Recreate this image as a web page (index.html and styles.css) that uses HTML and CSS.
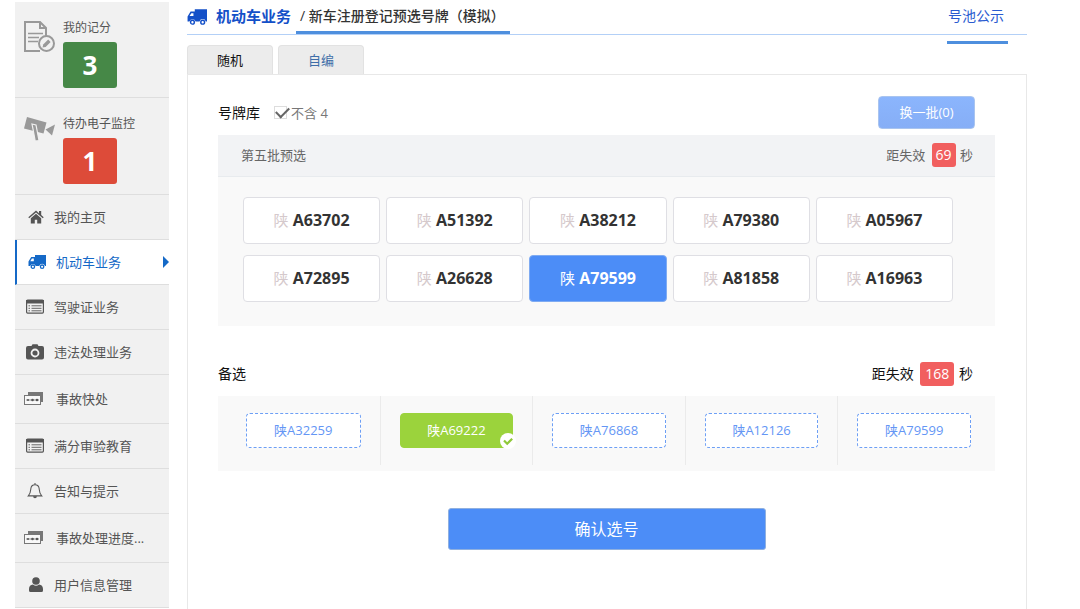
FILE: index.html
```html
<!DOCTYPE html>
<html lang="zh-CN">
<head>
<meta charset="utf-8">
<title>新车注册登记预选号牌</title>
<link rel="stylesheet" href="styles.css">
</head>
<body>
<svg class="sprite" aria-hidden="true">
  <symbol id="truck" viewBox="0 0 18 16">
    <path fill="currentColor" d="M7 1h11v11h-1.100a2.900 2.900 0 0 0-5.600 0H7.700a2.900 2.900 0 0 0-5.500 0H.5V7.500L3.200 3H7z"/>
    <path fill="#fff" d="M3.900 4.600H5.800v2.600H2.300z"/>
    <circle cx="4.900" cy="12.700" r="1.700" fill="#fff" stroke="currentColor" stroke-width="1.300"/>
    <circle cx="14.100" cy="12.700" r="1.700" fill="#fff" stroke="currentColor" stroke-width="1.300"/>
  </symbol>
  <symbol id="list" viewBox="0 0 18 15">
    <rect x=".6" y=".6" width="16.800" height="13" rx="1" fill="none" stroke="currentColor" stroke-width="1.200"/>
    <path fill="currentColor" d="M0 .5h18v3.500H0z"/>
    <path stroke="currentColor" stroke-width=".9" d="M2.500 6.300h1.500M5.500 6.300h10M2.500 8.800h1.500M5.500 8.800h10M2.500 11.300h1.500M5.500 11.300h10"/>
  </symbol>
  <symbol id="cards" viewBox="0 0 20 14">
    <path fill="#777" d="M4 0h15v10h-2V3H4z"/>
    <rect x=".5" y="3.500" width="16" height="9" fill="#f8f8f8" stroke="#777"/>
    <path stroke="#777" stroke-width=".8" d="M2 8h13"/>
    <g fill="#555"><circle cx="4" cy="8" r="1"/><circle cx="8.500" cy="8" r="1.300"/><circle cx="13" cy="8" r="1.300"/></g>
  </symbol>
</svg>
<div class="page">
  <aside class="sidebar">
    <section class="stat">
      <svg class="stat-icon" viewBox="0 0 31 31" fill="none" stroke="#999" stroke-width="2">
        <path d="M16 30H1V1h15l6 6v8"/>
        <path d="M16 1v6h6"/>
        <path d="M4 12.500h15M4 16.500h11M4 20.500h10" stroke-width="1.500"/>
        <circle cx="22.500" cy="22.500" r="7.500"/>
        <path fill="#999" stroke="none" d="M18.500 26.500l.7-3 5-5 2.400 2.400-5 5z"/>
      </svg>
      <div>
        <h2 class="stat-label">我的记分</h2>
        <strong class="stat-value green">3</strong>
      </div>
    </section>
    <section class="stat">
      <svg class="stat-icon" viewBox="0 0 31 31" fill="#999">
        <path d="M3 0l19.500 5.500-3 11L0 11.500z"/>
        <path fill="#999" stroke="#f1f1f1" stroke-width="1.200" d="M8 7l4 1 3 15.500-3.800.5-2.200-12z"/>
        <path d="M31 7.500l-3 11-6.500-6z"/>
      </svg>
      <div>
        <h2 class="stat-label">待办电子监控</h2>
        <strong class="stat-value red">1</strong>
      </div>
    </section>
    <nav class="menu">
      <a class="item" href="#"><svg class="icon small" viewBox="0 0 16 14" fill="currentColor"><path d="M8 .5L.3 7.300l.9 1L8 2.500l6.800 5.800.9-1-2.500-2.200V1H11v2.200z"/><path d="M8 3.800L2.800 8.200V13.500h4V9.800h2.400v3.700h4V8.200z"/></svg>我的主页</a>
      <a class="item active" href="#"><svg class="icon"><use href="#truck"/></svg>机动车业务</a>
      <a class="item" href="#"><svg class="icon"><use href="#list"/></svg>驾驶证业务</a>
      <a class="item" href="#"><svg class="icon" viewBox="0 0 18 16"><path fill="currentColor" d="M5.500 2L6.500.3h5L12.500 2H16a2 2 0 0 1 2 2v9.500a2 2 0 0 1-2 2H2a2 2 0 0 1-2-2V4a2 2 0 0 1 2-2z"/><circle cx="9" cy="9" r="3.500" fill="none" stroke="#f1f1f1" stroke-width="1.800"/></svg>违法处理业务</a>
      <a class="item tall" href="#"><svg class="icon wide"><use href="#cards"/></svg>事故快处</a>
      <a class="item" href="#"><svg class="icon"><use href="#list"/></svg>满分审验教育</a>
      <a class="item" href="#"><svg class="icon" viewBox="0 0 18 18" fill="none" stroke="currentColor" stroke-width="1.200"><path d="M9 0v2M1.500 14.500C4 12 4 9.500 4.300 6.500 4.600 3.500 6.500 2 9 2s4.400 1.500 4.700 4.500c.3 3 .3 5.500 2.800 8z"/><path d="M7.500 15a1.500 1.500 0 0 0 3 0" fill="currentColor"/></svg>告知与提示</a>
      <a class="item tall" href="#"><svg class="icon wide"><use href="#cards"/></svg>事故处理进度...</a>
      <a class="item" href="#"><svg class="icon small" viewBox="0 0 14 16" fill="currentColor"><circle cx="7" cy="4" r="3.800"/><path d="M4 7.500a4.800 4.800 0 0 0 6 0c2.500.3 4 1.700 4 4.500v1.500a1.500 1.500 0 0 1-1.500 1.500h-11A1.500 1.500 0 0 1 0 13.500V12c0-2.800 1.500-4.200 4-4.500z"/></svg>用户信息管理</a>
    </nav>
  </aside>
  <main class="main">
    <header class="header">
      <svg class="title-icon"><use href="#truck"/></svg>
      <h1 class="title">机动车业务</h1>
      <span class="subtitle">/ 新车注册登记预选号牌<span class="paren">（</span>模拟<span class="paren">）</span></span>
      <a class="notice" href="#">号池公示</a>
    </header>
    <div class="tabs" role="tablist">
      <button class="tab selected" role="tab" aria-selected="true">随机</button>
      <button class="tab" role="tab" aria-selected="false">自编</button>
    </div>
    <div class="panel">
      <div class="toolbar">
        <span>号牌库</span>
        <label class="filter"><input class="check" type="checkbox" checked>不含 4</label>
        <button class="refresh">换一批(0)</button>
      </div>
      <section class="pool">
        <div class="pool-head">
          <h2 class="pool-title">第五批预选</h2>
          <span class="timer">距失效 <b class="count">69</b> 秒</span>
        </div>
        <div class="plates">
          <button class="plate"><span class="region">陕</span> A63702</button>
          <button class="plate"><span class="region">陕</span> A51392</button>
          <button class="plate"><span class="region">陕</span> A38212</button>
          <button class="plate"><span class="region">陕</span> A79380</button>
          <button class="plate"><span class="region">陕</span> A05967</button>
          <button class="plate"><span class="region">陕</span> A72895</button>
          <button class="plate"><span class="region">陕</span> A26628</button>
          <button class="plate chosen"><span class="region">陕</span> A79599</button>
          <button class="plate"><span class="region">陕</span> A81858</button>
          <button class="plate"><span class="region">陕</span> A16963</button>
        </div>
      </section>
      <div class="spare-head">
        <h2 class="spare-title">备选</h2>
        <span class="timer large">距失效 <b class="count">168</b> 秒</span>
      </div>
      <div class="spares">
        <div class="cell"><button class="spare">陕A32259</button></div>
        <div class="cell"><button class="spare picked">陕A69222<svg class="tick" viewBox="0 0 16 16"><circle cx="8" cy="8" r="8" fill="#fff"/><path d="M4 7.500l3.200 3.200 5-5" fill="none" stroke="#8fc93a" stroke-width="2.200"/></svg></button></div>
        <div class="cell"><button class="spare">陕A76868</button></div>
        <div class="cell"><button class="spare">陕A12126</button></div>
        <div class="cell"><button class="spare">陕A79599</button></div>
      </div>
      <button class="confirm">确认选号</button>
    </div>
  </main>
</div>
</body>
</html>
```
FILE: styles.css
```css
* { box-sizing: border-box; }

body {
  margin: 0;
  background: #fff;
  color: #111;
  font: 14px/20px "Open Sans", "Noto Sans CJK SC", sans-serif;
}

button {
  font: inherit;
  padding: 0;
  cursor: pointer;
}

a { text-decoration: none; }

h1, h2 { margin: 0; font-weight: 400; }

.sprite { display: none; }

.page {
  display: flex;
  gap: 18px;
  min-height: 100vh;
  padding: 0 53px 0 15px;
}

/* Sidebar */
.sidebar {
  flex: 0 0 154px;
  padding-top: 2px;
}

.stat {
  display: flex;
  gap: 8px;
  height: 96px;
  padding: 16px 0 0 9px;
  background: #f1f1f1;
  border-bottom: 1px solid #dedede;
}

.stat + .stat { height: 97px; }

.stat-icon {
  width: 31px;
  height: 31px;
  margin-top: 3px;
}

.stat-label {
  color: #555;
  font-size: 12px;
  line-height: 20px;
}

.stat-value {
  display: block;
  width: 54px;
  margin-top: 4px;
  border-radius: 3px;
  color: #fff;
  font-size: 26px;
  line-height: 46px;
  text-align: center;
}

.green { background: #468847; }
.red { background: #dd4b39; }

.item {
  display: flex;
  align-items: center;
  height: 45px;
  padding-left: 11px;
  background: #f1f1f1;
  border-bottom: 1px solid #dedede;
  color: #555;
  font-size: 13px;
}

.item.tall { height: 49px; }

.icon {
  width: 18px;
  height: 16px;
  margin-right: 10px;
}

.icon.small {
  width: 16px;
  margin-left: 2px;
}

.icon.wide {
  width: 20px;
  height: 14px;
  margin: 0 12px 0 -2px;
}

.item.active {
  background: #fff;
  border-left: 2px solid #1569c7;
  color: #1569c7;
}

.item.active::after {
  content: "";
  margin-left: auto;
  border: 6px solid transparent;
  border-left-color: #1569c7;
  border-right: 0;
}

/* Page header */
.main {
  display: flex;
  flex: 1;
  flex-direction: column;
  min-width: 0;
}

.header {
  display: flex;
  align-items: flex-start;
  height: 35px;
  border-bottom: 1px solid #b3d0f7;
  line-height: 32px;
}

.title-icon {
  width: 20px;
  height: 18px;
  margin: 8px 9px 0 0;
  color: #1450c8;
}

.title {
  color: #1450c8;
  font-size: 15px;
  font-weight: 700;
  line-height: 32px;
}

.subtitle {
  margin-left: 5px;
  padding: 0 5px 0 4px;
  border-bottom: 3px solid #4e8fde;
  color: #333;
  font-weight: 500;
  line-height: 31px;
}

/* Full-width brackets centred in their em box */
.paren { font-family: "Noto Sans CJK TC", sans-serif; }

.notice {
  margin: 0 19px -10px auto;
  padding: 0 4px 9px 1px;
  border-bottom: 3px solid #4e8fde;
  color: #2a5bd0;
}

/* Tabs and panel */
.tabs {
  display: flex;
  gap: 5px;
  padding-top: 10px;
}

.tab {
  width: 86px;
  height: 29px;
  border: 1px solid #e2e2e2;
  border-bottom: 0;
  border-radius: 4px 4px 0 0;
  background: #ececec;
  color: #3e6ea8;
  font-size: 13px;
}

.tab.selected { color: #111; }

.panel {
  flex: 1;
  padding: 21px 31px 0 30px;
  border: solid #e8e8e8;
  border-width: 1px 1px 0;
}

.toolbar {
  display: flex;
  align-items: center;
  height: 33px;
  margin-bottom: 6px;
  padding-right: 20px;
}

.filter {
  display: flex;
  align-items: center;
  gap: 4px;
  margin-left: 14px;
  color: #777;
  font-size: 13px;
}

.check {
  appearance: none;
  width: 13px;
  height: 13px;
  margin: 0;
  border: 1px solid #ddd;
}

.check:checked::after {
  content: "";
  display: block;
  width: 11px;
  height: 6px;
  margin: 0 0 0 1px;
  border: solid #666;
  border-width: 0 0 2px 2px;
  rotate: -45deg;
}

.refresh {
  width: 97px;
  height: 33px;
  margin-left: auto;
  padding-bottom: 1px;
  border: 1px solid #a9c4ef;
  border-radius: 4px;
  background: linear-gradient(#8bb5fd, #86aef6);
  color: #fff;
  font-size: 13px;
}

.pool {
  background: #f9f9f9;
}

.pool-head {
  display: flex;
  align-items: center;
  justify-content: space-between;
  height: 42px;
  padding: 0 22px 2px 23px;
  border-bottom: 1px solid #e8ebee;
  background: #f2f3f5;
  color: #666;
}

.pool-title,
.timer { font-size: 13px; }

.timer.large { font-size: 14px; }

.count {
  display: inline-block;
  margin: 0 1px 0 3px;
  padding: 0 4px;
  border-radius: 3px;
  background: #f15f5f;
  color: #fff;
  font-size: 14px;
  font-weight: 400;
  line-height: 24px;
}

.timer.large .count { padding: 0 5px; }

.plates {
  display: grid;
  grid-template-columns: repeat(5, 1fr);
  gap: 11px 6px;
  padding: 20px 42px 24px 25px;
}

.plate {
  height: 47px;
  padding-bottom: 2px;
  border: 1px solid #dfdfe4;
  border-radius: 4px;
  background: #fff;
  color: #333;
  font-size: 16px;
  font-weight: 700;
}

.region {
  color: #d5c9cc;
  font-size: 15px;
  font-weight: 400;
}

.plate.chosen {
  border-color: #7fabf2;
  background: #4c8df7;
  color: #fff;
}

.chosen .region { color: #fff; }

.spare-head {
  display: flex;
  align-items: center;
  justify-content: space-between;
  height: 26px;
  margin: 35px 0 9px;
  padding-right: 22px;
}

.spare-title { font-size: 14px; }

.spares {
  display: grid;
  grid-template-columns: repeat(5, 1fr);
  padding: 0 5px 6px 9px;
  background: #f9f9f9;
}

.cell { padding: 17px 19px; }

.cell + .cell { border-left: 1px solid #ebebeb; }

.spare {
  position: relative;
  width: 100%;
  height: 35px;
  padding-bottom: 2px;
  border: 1px dashed #6d9ff5;
  border-radius: 4px;
  background: #fff;
  color: #6496f5;
  font-size: 13px;
}

.spare.picked {
  border-color: #9bd33c;
  border-style: solid;
  background: #9bd33c;
  color: #fff;
}

.tick {
  position: absolute;
  right: -4px;
  bottom: -2px;
  width: 16px;
  height: 16px;
}

.confirm {
  display: block;
  width: 318px;
  height: 42px;
  margin: 37px auto 0;
  border: 1px solid #8fb0e0;
  border-radius: 3px;
  background: #4c8df7;
  color: #fff;
  font-size: 16px;
}
```
